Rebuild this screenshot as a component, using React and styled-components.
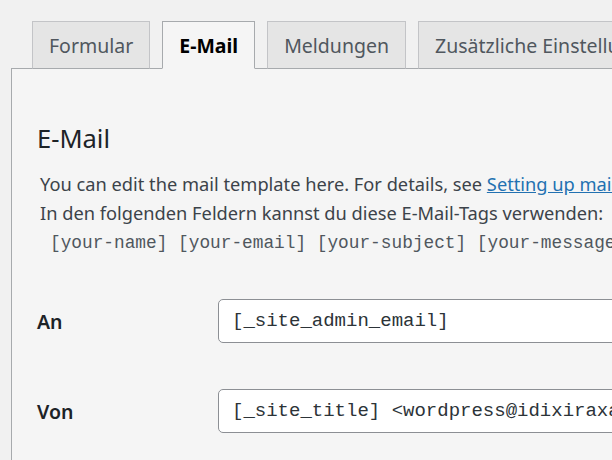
import React from "react";
import styled, { createGlobalStyle } from "styled-components";

const GlobalStyle = createGlobalStyle`
  html, body {
    margin: 0;
    padding: 0;
    background: #f1f1f1;
    overflow: hidden;
  }
  body {
    font-family: "Noto Sans", "Open Sans", sans-serif;
    color: #3c434a;
  }
`;

const Page = styled.div`
  width: 612px;
  height: 460px;
  padding: 21px 0 0 11px;
  box-sizing: border-box;
  overflow: hidden;
`;

const TabBar = styled.div`
  display: flex;
  align-items: flex-end;
  gap: 12px;
  padding-left: 21px;
  white-space: nowrap;
`;

const Tab = styled.div`
  flex-shrink: 0;
  box-sizing: border-box;
  height: 48px;
  padding: 0 16px;
  display: flex;
  align-items: center;
  font-size: 19.5px;
  margin-bottom: -1px;
  border: 1px solid ${(p) => (p.$active ? "#a7aaad" : "#c3c4c7")};
  border-bottom: 1px solid ${(p) => (p.$active ? "#f5f5f5" : "#a7aaad")};
  background: ${(p) => (p.$active ? "#f5f5f5" : "#e5e5e5")};
  color: ${(p) => (p.$active ? "#000" : "#50575e")};
  font-weight: ${(p) => (p.$active ? 700 : 400)};
  position: relative;
  z-index: 1;
`;

const Panel = styled.div`
  border-top: 1px solid #a7aaad;
  border-left: 1px solid #a7aaad;
  background: #f5f5f5;
  padding: 52px 0 0 25px;
  height: 400px;
  white-space: nowrap;
`;

const Title = styled.h2`
  margin: 0 0 14px;
  font-size: 25.5px;
  font-weight: 400;
  color: #1d2327;
  line-height: 34px;
`;

const Text = styled.p`
  margin: 0 0 0 3px;
  font-size: 18.25px;
  line-height: 29px;
`;

const Link = styled.a`
  color: #2271b1;
  text-decoration: underline;
`;

const Tags = styled.p`
  margin: 0 0 0 13px;
  font-family: "Liberation Mono", "DejaVu Sans Mono", monospace;
  font-size: 17.8px;
  line-height: 32px;
  color: #50575e;
`;

const Fields = styled.div`
  display: grid;
  grid-template-columns: 181px 1fr;
  row-gap: 46px;
  align-items: center;
  margin-top: 40px;
`;

const Label = styled.label`
  font-size: 19.5px;
  font-weight: 600;
  color: #1d2327;
`;

const Input = styled.div`
  box-sizing: border-box;
  height: 44px;
  width: 500px;
  display: flex;
  align-items: center;
  padding: 0 13px;
  background: #fff;
  border: 1px solid #8c8f94;
  border-radius: 5px;
  font-family: "Liberation Mono", "DejaVu Sans Mono", monospace;
  font-size: 19px;
  color: #2c3338;
`;

const tabs = ["Formular", "E-Mail", "Meldungen", "Zusätzliche Einstellungen"];

export default function App() {
  return (
    <>
      <GlobalStyle />
      <Page>
        <TabBar>
          {tabs.map((t) => (
            <Tab key={t} $active={t === "E-Mail"}>
              {t}
            </Tab>
          ))}
        </TabBar>
        <Panel>
          <Title>E-Mail</Title>
          <Text>
            You can edit the mail template here. For details, see{" "}
            <Link href="#">Setting up mail</Link>.
          </Text>
          <Text>In den folgenden Feldern kannst du diese E-Mail-Tags verwenden:</Text>
          <Tags>[your-name] [your-email] [your-subject] [your-message]</Tags>
          <Fields>
            <Label>An</Label>
            <Input>[_site_admin_email]</Input>
            <Label>Von</Label>
            <Input>[_site_title] &lt;wordpress@idixiraxa.com&gt;</Input>
          </Fields>
        </Panel>
      </Page>
    </>
  );
}
